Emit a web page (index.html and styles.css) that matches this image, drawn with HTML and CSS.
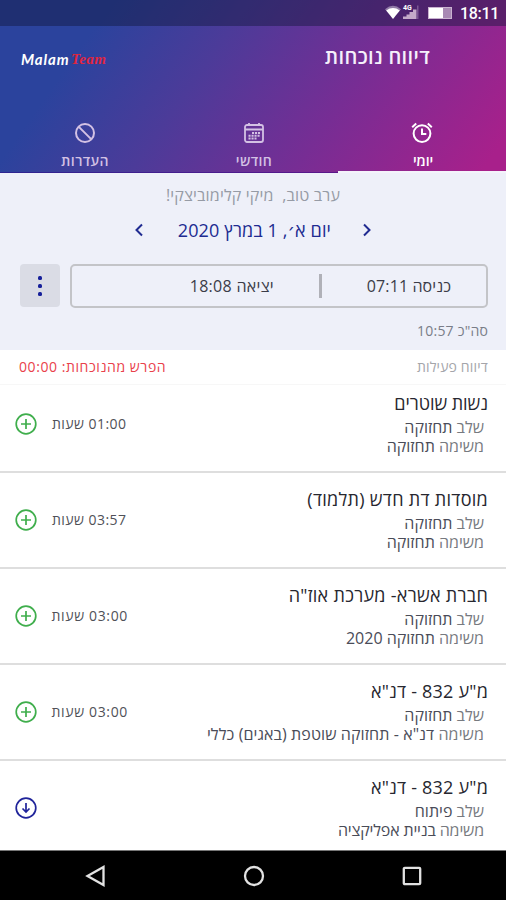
FILE: index.html
```
<!DOCTYPE html>
<html lang="he" dir="rtl">
<head>
<meta charset="utf-8">
<title>דיווח נוכחות</title>
<link rel="stylesheet" href="styles.css">
</head>
<body>
<header class="top">
  <div class="status" dir="ltr">
    <svg class="net" width="37" height="18" viewBox="0 0 37 18">
      <path d="M1 5.2Q9 -1.5 17 5.2L15 7.5Q9 3.5 3 7.5Z" fill="#fff" opacity=".4"/>
      <path d="M2.2 6.4Q9 1.5 15.8 6.4L9 15Z" fill="#fff"/>
      <path d="M19 15V12.5H22.5V10.5H25.5V8H29V5.5H32.5V15Z" fill="#c4aac9"/>
      <path d="M33 1.5h1.5V15H33Z" fill="#9b79ad" opacity=".6"/>
      <text class="net-label" x="19" y="6">4G</text>
    </svg>
    <span class="battery"></span>
    <span class="clock">18:11</span>
  </div>
  <div class="bar">
    <h1>דיווח נוכחות</h1>
    <div class="logo" dir="ltr"><span class="malam">Malam</span><span class="team">Team</span></div>
  </div>
  <nav class="tabs">
    <div class="tab active">
      <svg width="22" height="22" viewBox="0 0 22 22" fill="none" stroke="currentColor" stroke-width="2"><circle cx="11" cy="11.6" r="8.4"/><path d="M11 6.5V12h4.3M1.2 5.2 5.2 1.6M20.8 5.2l-4-3.6"/></svg>
      <span>יומי</span>
    </div>
    <div class="tab">
      <svg width="22" height="22" viewBox="0 0 22 22" fill="none" stroke="currentColor" stroke-width="1.8"><rect x="2" y="3" width="18" height="17" rx="2"/><path d="M2 7.5h18M6 1v3M16 1v3"/><path d="M9 11h8M5.5 13.8H17M5.5 16.6h8" stroke-width="2" stroke-dasharray="2.1 .9"/></svg>
      <span>חודשי</span>
    </div>
    <div class="tab">
      <svg width="22" height="22" viewBox="0 0 22 22" fill="none" stroke="currentColor" stroke-width="2"><circle cx="11" cy="11" r="9"/><path d="m4.6 4.6 12.8 12.8"/></svg>
      <span>העדרות</span>
    </div>
  </nav>
</header>

<section class="day">
  <p class="greeting">ערב טוב,&nbsp; מיקי קלימוביצקי!</p>
  <div class="date-row">
    <svg width="8" height="14" viewBox="0 0 8 14"><path d="m1 1.5 5.5 5.5L1 12.5"/></svg>
    <span class="date">יום א׳, 1 במרץ 2020</span>
    <svg width="8" height="14" viewBox="0 0 8 14"><path d="M7 1.5 1.5 7 7 12.5"/></svg>
  </div>
  <div class="times">
    <div class="box">
      <span class="in">כניסה 07:11</span>
      <span class="sep"></span>
      <span class="out">יציאה 18:08</span>
    </div>
    <div class="more"><i></i><i></i><i></i></div>
  </div>
  <p class="total">סה"כ 10:57</p>
</section>

<section class="summary">
  <span class="label">דיווח פעילות</span>
  <span class="diff">הפרש מהנוכחות: 00:00</span>
</section>

<main>
  <article class="row first">
    <div class="info"><h2 class="n">נשות שוטרים</h2><p>שלב <b>תחזוקה</b></p><p>משימה <b>תחזוקה</b></p></div>
    <div class="side"><span class="hours">01:00 שעות</span><svg class="add" width="22" height="22" viewBox="0 0 22 22"><circle cx="11" cy="11" r="9.8"/><path d="M11 6v10M6 11h10"/></svg></div>
  </article>
  <article class="row">
    <div class="info"><h2 class="w">מוסדות דת חדש (תלמוד)</h2><p>שלב <b>תחזוקה</b></p><p>משימה <b>תחזוקה</b></p></div>
    <div class="side"><span class="hours">03:57 שעות</span><svg class="add" width="22" height="22" viewBox="0 0 22 22"><circle cx="11" cy="11" r="9.8"/><path d="M11 6v10M6 11h10"/></svg></div>
  </article>
  <article class="row">
    <div class="info"><h2 class="w">חברת אשרא- מערכת אוז"ה</h2><p>שלב <b>תחזוקה</b></p><p>משימה <b>תחזוקה 2020</b></p></div>
    <div class="side"><span class="hours wide">03:00 שעות</span><svg class="add" width="22" height="22" viewBox="0 0 22 22"><circle cx="11" cy="11" r="9.8"/><path d="M11 6v10M6 11h10"/></svg></div>
  </article>
  <article class="row">
    <div class="info"><h2>מ"ע 832 - דנ"א</h2><p>שלב <b>תחזוקה</b></p><p class="long">משימה <b>דנ"א - תחזוקה שוטפת (באגים) כללי</b></p></div>
    <div class="side"><span class="hours wide">03:00 שעות</span><svg class="add" width="22" height="22" viewBox="0 0 22 22"><circle cx="11" cy="11" r="9.8"/><path d="M11 6v10M6 11h10"/></svg></div>
  </article>
  <article class="row last">
    <div class="info"><h2>מ"ע 832 - דנ"א</h2><p>שלב <b>פיתוח</b></p><p class="tight">משימה <b>בניית אפליקציה</b></p></div>
    <div class="side"><svg class="load" width="22" height="22" viewBox="0 0 22 22"><circle cx="11" cy="11" r="9.8"/><path d="M11 6v9M7.5 11.5 11 15l3.5-3.5"/></svg></div>
  </article>
</main>

<footer class="sysnav" dir="ltr">
  <svg width="22" height="22" viewBox="0 0 22 22"><path d="M2.5 11 18.5 2v18Z"/></svg>
  <svg width="22" height="22" viewBox="0 0 22 22"><circle cx="11" cy="11" r="9"/></svg>
  <svg width="22" height="22" viewBox="0 0 22 22"><rect x="2.8" y="2.8" width="16.4" height="16.4" rx="1"/></svg>
</footer>
</body>
</html>
```
FILE: styles.css
```
* { box-sizing: border-box; margin: 0; padding: 0; }
body {
  width: 506px; height: 900px; overflow: hidden;
  display: flex; flex-direction: column;
  font-family: "Open Sans", "DejaVu Sans", sans-serif;
  background: #fff; color: #27272f; white-space: nowrap;
}
.top {
  height: 173px; flex: none; display: flex; flex-direction: column;
  background: linear-gradient(125deg, #2b439d 18%, #4c3b99 40%, #772d94 66%, #a8208b 96%);
}
.status {
  height: 26px; display: flex; align-items: center; justify-content: flex-end;
  padding-right: 8px; background: rgba(15, 22, 55, .42);
}
.net { margin-right: 7px; }
.net-label { font: 700 7px "Roboto", sans-serif; fill: #fff; }
.battery {
  width: 24px; height: 12px; margin-right: 8px; border: 1px solid #c9b2d0;
  background: linear-gradient(90deg, #fff 62%, #a889b4 62%);
}
.clock { font: 500 16px/26px "Roboto", sans-serif; color: #fff; width: 38px; letter-spacing: -.3px; padding-top: 2px; }
.bar { height: 62px; display: flex; justify-content: space-between; padding: 0 76px 0 21px; }
h1 { font-size: 20px; line-height: 27px; font-weight: 600; letter-spacing: .35px; color: #f5f0fb; margin-top: 17px; }
.logo { display: flex; align-items: center; height: 20px; margin-top: 23px; font-style: italic; font-weight: 700; }
.malam { font-family: "Lato", sans-serif; font-size: 15px; color: #fff; width: 50px; letter-spacing: .9px; }
.team { font-family: "Liberation Serif", serif; font-size: 15px; color: #e0263f; letter-spacing: .4px; }
.tabs { height: 85px; display: grid; grid-template-columns: 168px 169px 169px; }
.tab {
  display: flex; flex-direction: column; align-items: center; padding-top: 34px;
  color: #d3c1e4; font-size: 14px; font-weight: 600; letter-spacing: .4px;
  border-bottom: 2px solid rgba(45, 0, 130, .45);
}
.tab svg { height: 22px; }
.tab span { line-height: 20px; margin-top: 7px; padding-left: 1px; }
.tab.active { color: #fff; border-bottom: 3px solid #f4f3fb; letter-spacing: -.1px; }
.tab.active span { padding-left: 2px; }

.day { height: 177px; flex: none; background: #eef0f9; padding-top: 10px; }
.greeting { text-align: center; font-size: 16px; line-height: 24px; letter-spacing: .16px; color: #969ba5; }
.date-row { height: 28px; margin-top: 9px; display: flex; align-items: center; justify-content: center; gap: 32px; color: #202b91; }
.date { width: 156px; font-size: 18px; line-height: 28px; letter-spacing: .1px; }
.date-row svg { fill: none; stroke: #202b91; stroke-width: 2; }
.times { display: flex; gap: 10px; padding: 0 18px 0 20px; margin-top: 20px; }
.box {
  width: 418px; height: 44px; border: 2px solid #c3c4c8; border-radius: 5px;
  display: flex; align-items: center; font-size: 16px; color: #3b3c48; padding-right: 35px;
}
.in { width: 84px; letter-spacing: .1px; }
.sep { width: 3px; height: 24px; background: #b0b1b8; margin: 0 45px; }
.out { letter-spacing: .3px; }
.more {
  width: 40px; height: 43px; border-radius: 4px; background: #dadce5;
  display: flex; flex-direction: column; align-items: center; justify-content: center; gap: 4px;
}
.more i { width: 4px; height: 4px; border-radius: 1.5px; background: #17209a; }
.total { padding-right: 18px; margin-top: 13px; font-size: 14px; line-height: 20px; letter-spacing: .2px; color: #797d88; }

.summary {
  height: 35px; flex: none; display: flex; justify-content: space-between; padding: 7px 18px 0 19px;
  font-size: 14px; line-height: 20px; border-bottom: 1px solid #f7f7f7;
}
.label { color: #a4a5aa; letter-spacing: .17px; }
.diff { color: #e9414b; letter-spacing: .57px; }

main { flex: none; height: 465px; overflow: hidden; }
.row { height: 96px; display: flex; justify-content: space-between; padding: 13px 18px 0 15px; border-bottom: 2px solid #dedede; }
.first { height: 88px; padding-top: 5px; }
.row h2 { font-size: 18px; font-weight: 400; line-height: 26px; letter-spacing: .2px; margin-bottom: 2px; }
.row h2.w { letter-spacing: .28px; }
.row h2.n { letter-spacing: -.05px; }
.row p { padding-right: 4px; font-size: 16px; line-height: 19px; color: #777a80; }
.row b { font-weight: 400; color: #4a4c58; }
.row .long { letter-spacing: .09px; }
.row .tight { letter-spacing: -.16px; }
.side { display: flex; align-items: center; height: 22px; margin-top: 23px; gap: 15px; }
.hours { width: 76px; text-align: left; font-size: 14px; line-height: 20px; letter-spacing: .45px; color: #505158; padding-bottom: 1px; }
.wide { letter-spacing: .65px; }
.add, .load { fill: none; stroke: #3fae4c; stroke-width: 1.7; }
.load { stroke: #20249a; }
.last { border: 0; height: 90px; }

.sysnav { flex: 1; background: #000; display: flex; align-items: center; justify-content: center; gap: 136px; border-top: 1px solid #777; padding-left: 2px; }
.sysnav svg { fill: none; stroke: #e2e2e2; stroke-width: 2.3; }
```
